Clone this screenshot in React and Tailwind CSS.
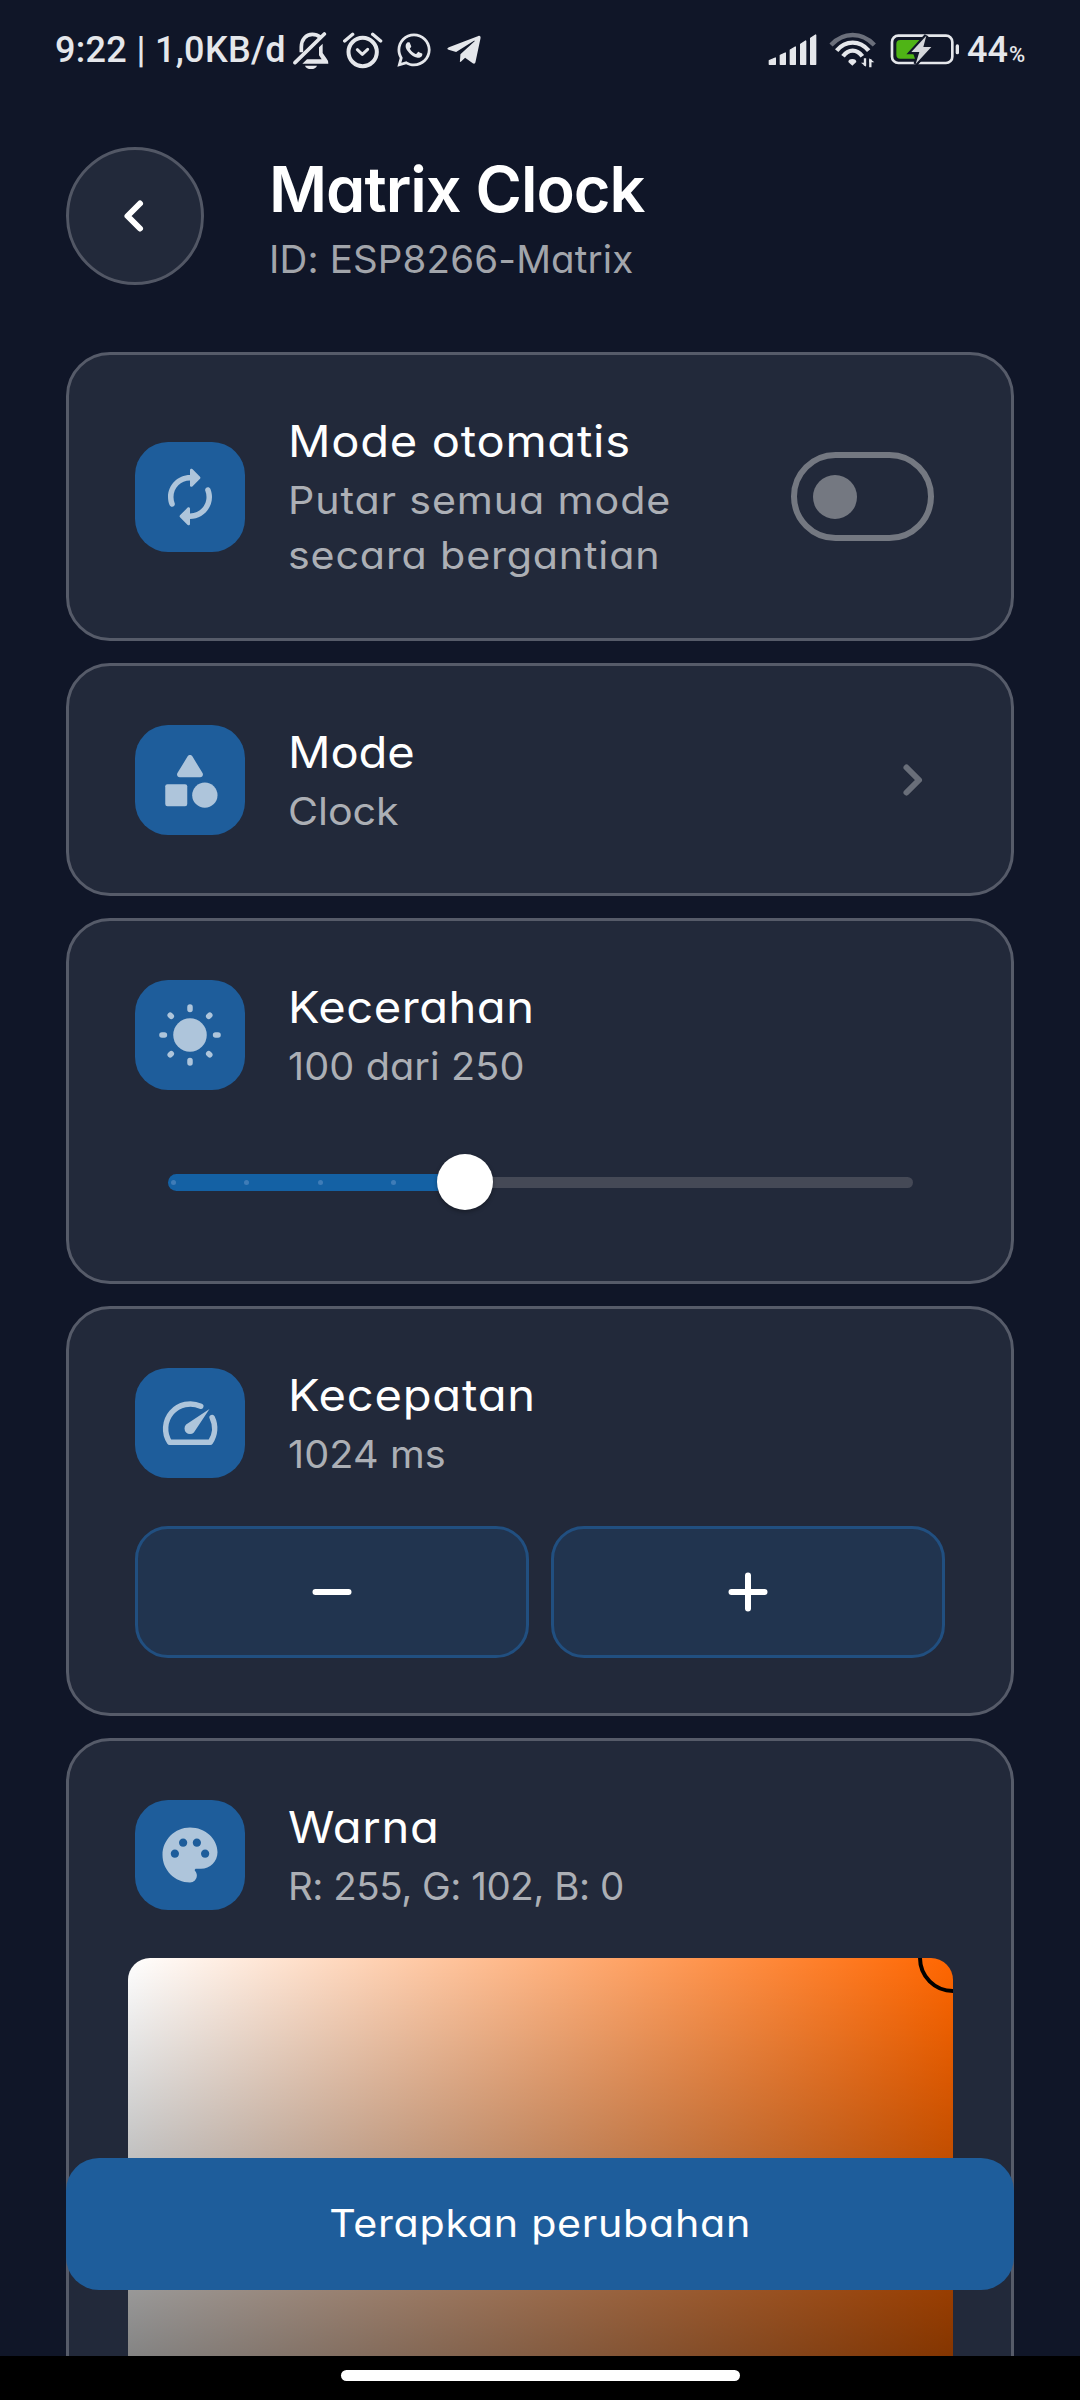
import { FaWhatsapp, FaTelegramPlane } from "react-icons/fa";
import { MdPalette } from "react-icons/md";

const INK = "#e5e7eb";

function BellOffIcon() {
  return (
    <svg width="36" height="39" viewBox="760 60 108 117" className="shrink-0">
      <path d="M785 124V108C785 86 799 70 818 70C827 70 835 73 841 78" fill="none" stroke={INK} strokeWidth="11" />
      <path d="M766 155L854 69" stroke={INK} strokeWidth="11" strokeLinecap="round" />
      <path d="M849 98V126L861 143Q866 148 866 158H788L802 145H846L838 133V109Z" fill={INK} />
      <path d="M796 164H832Q828 174 814 174T796 164Z" fill={INK} />
    </svg>
  );
}

function AlarmIcon() {
  return (
    <svg width="41" height="38" viewBox="906 58 123 114" className="shrink-0" fill="none" stroke={INK} strokeLinecap="round">
      <circle cx="968" cy="121" r="42.5" strokeWidth="12" />
      <path d="M952 114L967 128L983 113" strokeWidth="9" strokeLinejoin="round" />
      <path d="M914 88L938 68M998 68L1022 88" strokeWidth="10" />
    </svg>
  );
}

function SignalIcon() {
  return (
    <svg width="49" height="32" viewBox="86 71 147 96" className="shrink-0" fill={INK} stroke={INK} strokeWidth="4" strokeLinejoin="round">
      <path d="M90 151L108 143V162H90Z" />
      <path d="M123 135L138 128V162H123Z" />
      <path d="M153 119L168 110V162H153Z" />
      <path d="M184 102L199 92V162H184Z" />
      <path d="M214 84L229 74V162H214Z" />
    </svg>
  );
}

function WifiIcon() {
  return (
    <svg width="47" height="36" viewBox="268 66 141 108" className="shrink-0" fill="none" strokeWidth="13">
      <path d="M274 105Q302 75 339 75T404 105" stroke="#6b6f7b" />
      <path d="M291 122Q311 98 339 98T387 122" stroke={INK} />
      <path d="M310 139Q322 122 339 122T368 139" stroke={INK} />
      <path d="M326 156Q326 147 338 147T350 156L338 167Z" fill={INK} />
      <path d="M376 145V167M392 148V172" stroke={INK} strokeWidth="7" />
      <path d="M364 158L379 170V158ZM389 157V145L404 157Z" fill={INK} />
    </svg>
  );
}

function BatteryIcon() {
  return (
    <svg width="70" height="34" viewBox="451 68 210 102" className="shrink-0">
      <rect x="457" y="76" width="181" height="82" rx="19" fill="none" stroke={INK} strokeWidth="8" />
      <path d="M482 89H548L506 128H520L526 145H482Q470 145 470 133V101Q470 89 482 89Z" fill="#4fb416" />
      <path d="M560 76L515 125H539L528 161L575 110H551Z" fill="#d5d7db" stroke="#111728" strokeWidth="13" />
      <path d="M560 76L515 125H539L528 161L575 110H551Z" fill="#d5d7db" />
      <rect x="648" y="102" width="10" height="30" rx="5" fill={INK} />
    </svg>
  );
}

function RotateIcon() {
  return (
    <svg width="66" height="66" viewBox="0 0 24 24" fill="currentColor">
      <path d="M12 6v1.79c0 .45.54.67.85.35l2.79-2.79c.2-.2.2-.51 0-.71l-2.79-2.79c-.31-.31-.85-.09-.85.36V4c-4.42 0-8 3.58-8 8 0 1.04.2 2.04.57 2.95.27.67 1.13.85 1.64.34.27-.27.38-.68.23-1.04C6.15 13.56 6 12.79 6 12c0-3.31 2.69-6 6-6zm5.79 2.71c-.27.27-.38.69-.23 1.04.28.7.44 1.46.44 2.25 0 3.31-2.69 6-6 6v-1.79c0-.45-.54-.67-.85-.35l-2.79 2.79c-.2.2-.2.51 0 .71l2.79 2.79c.31.31.85.09.85-.35V20c4.42 0 8-3.58 8-8 0-1.04-.2-2.04-.57-2.95-.27-.67-1.13-.85-1.64-.34z" />
    </svg>
  );
}

function ShapesIcon() {
  return (
    <svg width="66" height="66" viewBox="0 0 24 24" fill="currentColor">
      <path d="M11.15 3.4L7.43 9.48c-.41.66.07 1.52.85 1.52h7.43c.78 0 1.26-.86.85-1.52L12.85 3.4c-.39-.64-1.31-.64-1.7 0z" />
      <circle cx="17.4" cy="17.5" r="4.6" />
      <rect x="3" y="13.5" width="8" height="8" rx="0.8" />
    </svg>
  );
}

function SunIcon() {
  return (
    <svg width="66" height="66" viewBox="0 0 24 24" fill="currentColor" stroke="currentColor" className="overflow-visible">
      <circle cx="12" cy="12" r="6.1" stroke="none" />
      <path
        d="M12 2.7V1.8M12 21.3V22.2M2.7 12H1.8M21.3 12H22.2M5.2 5.2L4.8 4.8M18.8 5.2L19.2 4.8M5.2 18.8L4.8 19.2M18.8 18.8L19.2 19.2"
        strokeWidth="2"
        strokeLinecap="round"
      />
    </svg>
  );
}

function SpeedIcon() {
  return (
    <svg width="66" height="66" viewBox="0 0 24 24" fill="none" stroke="currentColor">
      <path d="M15.9 5.9A9 9 0 0 0 4.6 19H19.4A9 9 0 0 0 20.05 10" strokeWidth="2" strokeLinecap="round" strokeLinejoin="round" />
      <path d="M10.59 15.41a2 2 0 0 0 2.83 0l5.66-8.49-8.49 5.66a2 2 0 0 0 0 2.83z" fill="currentColor" stroke="none" />
    </svg>
  );
}

function Card({ children, className = "" }) {
  return (
    <section className={`rounded-[44px] border-[3px] border-[#565b69] bg-[#22293a] px-[66px] py-[55px] ${className}`}>
      {children}
    </section>
  );
}

function CardRow({ icon, title, titleStyle, lines, trailing }) {
  return (
    <div className="flex items-center">
      <div className="flex size-[110px] shrink-0 items-center justify-center rounded-[33px] bg-[#1e5d9b] text-[#aec5db]">
        {icon}
      </div>
      <div className="ml-[43px] grow whitespace-pre">
        <h2 className={`w-fit origin-left text-[44px] leading-[63px] text-white ${titleStyle}`}>{title}</h2>
        {lines.map(([text, style]) => (
          <p key={text} className={`w-fit origin-left text-[38.5px] leading-[55px] text-[#acafb5] ${style}`}>
            {text}
          </p>
        ))}
      </div>
      {trailing}
    </div>
  );
}

function StepButton({ children }) {
  return (
    <button className="flex h-[132px] flex-1 items-center justify-center rounded-[33px] border-[3px] border-[#214f80] bg-[#21344f]">
      <svg width="66" height="66" viewBox="0 0 66 66" fill="none" stroke="white" strokeWidth="6" strokeLinecap="round">
        {children}
      </svg>
    </button>
  );
}

export default function App() {
  return (
    <div className="relative flex h-[2400px] w-[1080px] flex-col overflow-hidden bg-[#101628] font-['Inter',sans-serif] [font-feature-settings:'cv11']">
      <div className="flex h-[100px] shrink-0 items-center font-['Roboto',sans-serif] text-[36px] font-medium whitespace-pre text-[#e5e7eb] [font-feature-settings:normal]">
        <span className="ml-[55px] w-[238px] tracking-[0.32px]">9:22 | 1,0KB/d</span>
        <BellOffIcon />
        <span className="ml-[13px] flex">
          <AlarmIcon />
        </span>
        <FaWhatsapp className="ml-[12px] size-[38px] shrink-0" />
        <FaTelegramPlane className="ml-[12px] size-[38px] shrink-0" />
        <span className="mr-[12px] ml-auto flex">
          <SignalIcon />
        </span>
        <WifiIcon />
        <span className="mr-[7px] ml-[14px] flex">
          <BatteryIcon />
        </span>
        <span className="flex w-[113px] items-baseline">
          44<span className="ml-px text-[22px]">%</span>
        </span>
      </div>

      <header className="mt-[47px] flex h-[138px] shrink-0 items-center px-[66px]">
        <button className="flex size-[138px] shrink-0 items-center justify-center rounded-full border-[3px] border-[#525765] bg-[#22293a]">
          <svg width="66" height="66" viewBox="0 0 66 66" fill="none" stroke="white" strokeWidth="6" strokeLinecap="round" strokeLinejoin="round">
            <path d="M38 20.5L25.5 33L38 45.5" />
          </svg>
        </button>
        <div className="ml-[65px] whitespace-pre">
          <h1 className="text-[63px] leading-[86px] font-semibold tracking-[-1px] text-white">Matrix Clock</h1>
          <p className="text-[38.5px] leading-[55px] tracking-[0.16px] text-[#a2a5ab]">ID: ESP8266-Matrix</p>
        </div>
      </header>

      <main className="mx-[66px] mt-[67px] flex min-h-0 flex-1 flex-col gap-[22px] overflow-hidden">
        <Card className="h-[289px] shrink-0">
          <CardRow
            icon={<RotateIcon />}
            title="Mode otomatis"
            titleStyle="scale-x-[1.07] tracking-[0.67px]"
            lines={[
              ["Putar semua mode", "scale-x-[1.07] tracking-[0.82px]"],
              ["secara bergantian", "scale-x-[1.07] tracking-[0.79px]"],
            ]}
            trailing={
              <div className="mr-[11px] flex h-[89px] w-[143px] shrink-0 items-center rounded-full border-[6px] border-[#747881] pl-[16px]">
                <span className="size-[44px] rounded-full bg-[#747881]" />
              </div>
            }
          />
        </Card>

        <Card className="h-[233px] shrink-0">
          <CardRow
            icon={<ShapesIcon />}
            title="Mode"
            titleStyle="scale-x-[1.07] tracking-[-0.1px]"
            lines={[["Clock", "scale-x-[1.07] tracking-[-0.07px]"]]}
            trailing={
              <svg width="66" height="66" viewBox="0 0 66 66" fill="none" stroke="#696e79" strokeWidth="6" strokeLinecap="round" strokeLinejoin="round">
                <path d="M27.5 20.5L40 33L27.5 45.5" />
              </svg>
            }
          />
        </Card>

        <Card className="h-[366px] shrink-0">
          <CardRow
            icon={<SunIcon />}
            title="Kecerahan"
            titleStyle="scale-x-[1.07] tracking-[0.49px]"
            lines={[["100 dari 250", "scale-x-[1.03] tracking-[0.08px]"]]}
          />
          <div className="mt-[44px] flex h-[88px] items-center pr-[32px] pl-[33px]">
            <div className="flex h-[17px] w-[270px] items-center justify-between rounded-l-full bg-[#1461a4] pl-[3px]">
              <span className="size-[5px] rounded-full bg-[#3f7cb7]" />
              <span className="size-[5px] rounded-full bg-[#3f7cb7]" />
              <span className="size-[5px] rounded-full bg-[#3f7cb7]" />
              <span className="mr-[42px] size-[5px] rounded-full bg-[#3f7cb7]" />
            </div>
            <div className="z-10 -mx-px size-[56px] shrink-0 rounded-full bg-white shadow-[0_2px_4px_rgba(0,0,0,0.3)]" />
            <div className="h-[11px] grow rounded-r-full bg-[#454956]" />
          </div>
        </Card>

        <Card className="h-[410px] shrink-0">
          <CardRow
            icon={<SpeedIcon />}
            title="Kecepatan"
            titleStyle="scale-x-[1.07] tracking-[0.73px]"
            lines={[["1024 ms", "scale-x-[1.03] tracking-[0.1px]"]]}
          />
          <div className="mt-[44px] flex gap-[22px]">
            <StepButton>
              <path d="M16.5 33H49.5" />
            </StepButton>
            <StepButton>
              <path d="M16.5 33H49.5M33 16.5V49.5" />
            </StepButton>
          </div>
        </Card>

        <Card className="h-[1100px] shrink-0">
          <CardRow
            icon={<MdPalette size={66} />}
            title="Warna"
            titleStyle="scale-x-[1.07] tracking-[0.66px]"
            lines={[["R: 255, G: 102, B: 0", "tracking-[-0.47px]"]]}
          />
          <div className="relative -mx-[7.5px] mt-[44px] h-[825px] overflow-hidden rounded-[22px] bg-[linear-gradient(to_bottom,transparent,black),linear-gradient(to_right,white,#ff6600)]">
            <span className="absolute -top-[35px] -right-[35px] size-[70px] rounded-full border-4 border-black" />
          </div>
        </Card>
      </main>

      <button className="absolute top-[2158px] left-[66px] flex h-[132px] w-[948px] items-center justify-center rounded-[33px] bg-[#1e5d9b] text-[38.5px] text-white">
        <span className="scale-x-[1.07] tracking-[0.67px]">Terapkan perubahan</span>
      </button>

      <div className="flex h-[44px] shrink-0 justify-center bg-black pt-[14px]">
        <span className="h-[11px] w-[399px] rounded-full bg-white" />
      </div>
    </div>
  );
}
